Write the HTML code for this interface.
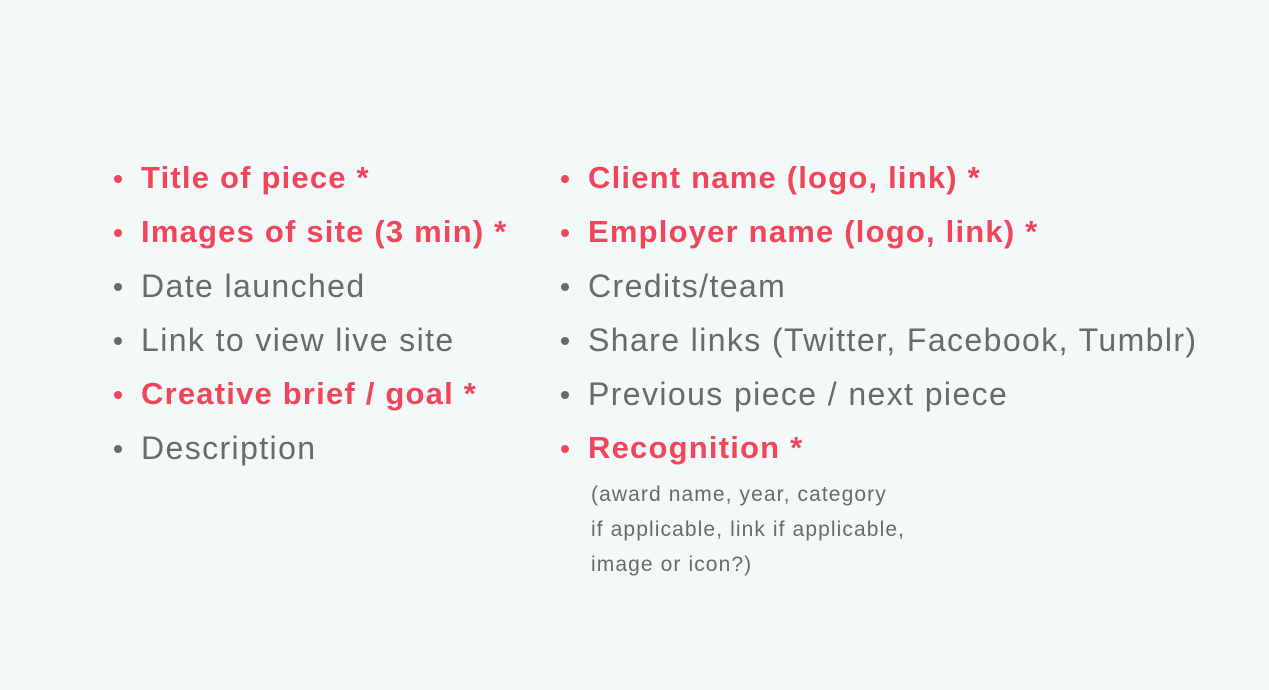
<!DOCTYPE html><html><head><style>
body{margin:0;width:1269px;height:690px;background:#f2f9f8;font-family:"Liberation Sans",sans-serif;position:relative;overflow:hidden}
.i{position:absolute;font-size:32px;letter-spacing:1.4px;line-height:54px;color:#676b6b;white-space:nowrap}
.i::before{content:"";position:absolute;left:-27px;top:24px;width:8px;height:8px;border-radius:50%;background:currentColor}
.r{color:#f0455a;font-weight:bold;font-size:31px;letter-spacing:1.2px}
.s{position:absolute;left:591px;font-size:21px;letter-spacing:1.1px;line-height:35px;color:#676b6b;white-space:nowrap}
</style></head><body>
<div class="i r" style="left:141px;top:151px">Title of piece *</div>
<div class="i r" style="left:141px;top:205px">Images of site (3 min) *</div>
<div class="i" style="left:141px;top:259px">Date launched</div>
<div class="i" style="left:141px;top:313px">Link to view live site</div>
<div class="i r" style="left:141px;top:367px">Creative brief / goal *</div>
<div class="i" style="left:141px;top:421px">Description</div>
<div class="i r" style="left:588px;top:151px">Client name (logo, link) *</div>
<div class="i r" style="left:588px;top:205px">Employer name (logo, link) *</div>
<div class="i" style="left:588px;top:259px">Credits/team</div>
<div class="i" style="left:588px;top:313px">Share links (Twitter, Facebook, Tumblr)</div>
<div class="i" style="left:588px;top:367px">Previous piece / next piece</div>
<div class="i r" style="left:588px;top:421px">Recognition *</div>
<div class="s" style="top:477px">(award name, year, category<br>if applicable, link if applicable,<br>image or icon?)</div>
</body></html>
